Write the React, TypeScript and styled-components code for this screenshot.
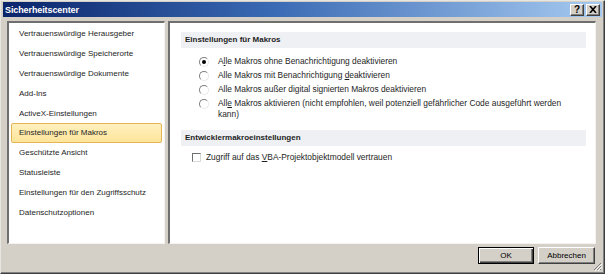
import styled, { createGlobalStyle } from "styled-components";

const GlobalStyle = createGlobalStyle`
  html, body {
    margin: 0;
    padding: 0;
    background: #d4d0c8;
  }
  body {
    font-family: "Liberation Sans", Arial, sans-serif;
    font-size: 8px;
    color: #1e1e1e;
  }
`;

const navItems = [
  "Vertrauenswürdige Herausgeber",
  "Vertrauenswürdige Speicherorte",
  "Vertrauenswürdige Dokumente",
  "Add-Ins",
  "ActiveX-Einstellungen",
  "Einstellungen für Makros",
  "Geschützte Ansicht",
  "Statusleiste",
  "Einstellungen für den Zugriffsschutz",
  "Datenschutzoptionen",
];

const App = () => {
  return (
    <>
      <GlobalStyle />
      <S.Window>
        <S.TitleBar>
          <S.Title>Sicherheitscenter</S.Title>
          <S.TitleButtons>
            <S.TitleButton>?</S.TitleButton>
            <S.TitleButton>
              <svg width="8" height="7" viewBox="0 0 8 7">
                <path d="M1 0 L7 7 M7 0 L1 7" stroke="#000" strokeWidth="1.6" />
              </svg>
            </S.TitleButton>
          </S.TitleButtons>
        </S.TitleBar>

        <S.Body>
          <S.Sidebar>
            {navItems.map((item) => (
              <S.NavItem key={item} $active={item === "Einstellungen für Makros"}>
                {item}
              </S.NavItem>
            ))}
          </S.Sidebar>

          <S.Content>
            <S.SectionHeader>Einstellungen für Makros</S.SectionHeader>
            <S.RadioGroup>
              <S.OptionRow>
                <S.Radio $checked />
                <S.OptionText>
                  A<u>l</u>le Makros ohne Benachrichtigung deaktivieren
                </S.OptionText>
              </S.OptionRow>
              <S.OptionRow>
                <S.Radio />
                <S.OptionText>
                  Alle Makros mit Benachrichtigung <u>d</u>eaktivieren
                </S.OptionText>
              </S.OptionRow>
              <S.OptionRow>
                <S.Radio />
                <S.OptionText>
                  Alle Makros außer digital signierten Makros deaktivieren
                </S.OptionText>
              </S.OptionRow>
              <S.OptionRow>
                <S.Radio />
                <S.OptionText>
                  All<u>e</u> Makros aktivieren (nicht empfohlen, weil potenziell
                  gefährlicher Code ausgeführt werden kann)
                </S.OptionText>
              </S.OptionRow>
            </S.RadioGroup>

            <S.SectionHeader $spaced>Entwicklermakroeinstellungen</S.SectionHeader>
            <S.CheckRow>
              <S.Checkbox />
              <S.OptionText>
                Zugriff auf das <u>V</u>BA-Projektobjektmodell vertrauen
              </S.OptionText>
            </S.CheckRow>
          </S.Content>
        </S.Body>

        <S.Footer>
          <S.Button $default>OK</S.Button>
          <S.Button>Abbrechen</S.Button>
        </S.Footer>

        <S.Grip width="9" height="9" viewBox="0 0 9 9">
          <path d="M8 1 L1 8 M8 4 L4 8 M8 7 L7 8" stroke="#808080" strokeWidth="1" />
          <path d="M9 2 L2 9 M9 5 L5 9" stroke="#ffffff" strokeWidth="1" />
        </S.Grip>
      </S.Window>
    </>
  );
};
export default App;

const Window = styled.div`
  position: relative;
  box-sizing: border-box;
  width: 605px;
  height: 274px;
  display: flex;
  flex-direction: column;
  padding: 1px 2px 2px 2px;
  background: #d4d0c8;
  border: 1px solid;
  border-color: #e8e6e1 #404040 #404040 #e8e6e1;
  box-shadow: inset -1px -1px 0 #808080;
`;

const TitleBar = styled.div`
  flex: none;
  height: 15px;
  display: flex;
  align-items: center;
  justify-content: space-between;
  padding: 0 2px 0 2px;
  background: linear-gradient(90deg, #0a246a 0%, #3a6ab4 45%, #a6caf0 100%);
`;

const Title = styled.span`
  color: #ffffff;
  font-weight: bold;
  font-size: 9px;
  letter-spacing: -0.1px;
`;

const TitleButtons = styled.div`
  display: flex;
  gap: 2px;
`;

const TitleButton = styled.div`
  box-sizing: border-box;
  width: 14px;
  height: 12px;
  display: flex;
  align-items: center;
  justify-content: center;
  background: #d4d0c8;
  border: 1px solid;
  border-color: #ffffff #404040 #404040 #ffffff;
  box-shadow: inset -1px -1px 0 #808080;
  font-weight: bold;
  font-size: 10px;
  color: #000;
`;

const Body = styled.div`
  flex: none;
  display: flex;
  gap: 3px;
  padding: 4px 6px 0 4px;
`;

const Sidebar = styled.div`
  box-sizing: border-box;
  width: 158px;
  height: 223px;
  padding: 1px 1px 0 1px;
  background: #ffffff;
  border-style: solid;
  border-width: 2px 1px 1px 2px;
  border-color: #6f6f6f #f4f3f0 #f4f3f0 #6f6f6f;
`;

const NavItem = styled.div<{ $active?: boolean }>`
  box-sizing: border-box;
  height: 19.8px;
  display: flex;
  align-items: center;
  padding-left: 7px;
  margin: 0 1px;
  white-space: nowrap;
  border-radius: 2px;
  border: 1px solid ${(p) => (p.$active ? "#e4b456" : "transparent")};
  background: ${(p) =>
    p.$active ? "linear-gradient(180deg, #fff0bf 0%, #fde49a 100%)" : "transparent"};
`;

const Content = styled.div`
  box-sizing: border-box;
  flex: 1;
  height: 223px;
  padding: 9px 9px 0 11px;
  background: #ffffff;
  font-size: 8.4px;
  border-style: solid;
  border-width: 2px 1px 1px 2px;
  border-color: #6f6f6f #f4f3f0 #f4f3f0 #6f6f6f;
`;

const SectionHeader = styled.div<{ $spaced?: boolean }>`
  height: 16px;
  line-height: 16px;
  padding-left: 4px;
  margin-top: ${(p) => (p.$spaced ? "10px" : "0")};
  background: #eef0f4;
  font-weight: bold;
  font-size: 8px;
`;

const RadioGroup = styled.div`
  display: flex;
  flex-direction: column;
  gap: 3px;
  margin-top: 8px;
  padding-left: 18px;
`;

const OptionRow = styled.div`
  display: flex;
  align-items: flex-start;
  gap: 9px;
`;

const OptionText = styled.span`
  line-height: 11px;
  max-width: 356px;
`;

const Radio = styled.span<{ $checked?: boolean }>`
  box-sizing: border-box;
  flex: none;
  width: 10px;
  height: 10px;
  margin-top: 1px;
  border-radius: 50%;
  border: 1px solid;
  border-color: #808080 #e8e8e8 #e8e8e8 #808080;
  background: #ffffff;
  display: flex;
  align-items: center;
  justify-content: center;

  &::after {
    content: "";
    width: 4px;
    height: 4px;
    border-radius: 50%;
    background: ${(p) => (p.$checked ? "#000" : "transparent")};
  }
`;

const CheckRow = styled.div`
  display: flex;
  align-items: center;
  gap: 5px;
  margin-top: 6px;
  padding-left: 11px;
`;

const Checkbox = styled.span`
  box-sizing: border-box;
  flex: none;
  width: 9px;
  height: 9px;
  background: #ffffff;
  border: 1px solid;
  border-color: #707070 #d8d8d8 #d8d8d8 #707070;
`;

const Footer = styled.div`
  flex: 1;
  display: flex;
  justify-content: flex-end;
  align-items: flex-start;
  gap: 4px;
  padding: 3px 7px 0 0;
`;

const Button = styled.div<{ $default?: boolean }>`
  box-sizing: border-box;
  width: ${(p) => (p.$default ? "56px" : "57px")};
  height: 17px;
  display: flex;
  align-items: center;
  justify-content: center;
  background: #d4d0c8;
  border: 1px solid;
  border-color: ${(p) =>
    p.$default ? "#000 #000 #000 #000" : "#ffffff #404040 #404040 #ffffff"};
  box-shadow: ${(p) =>
    p.$default
      ? "inset 1px 1px 0 #ffffff, inset -1px -1px 0 #404040, inset -2px -2px 0 #808080"
      : "inset -1px -1px 0 #808080"};
  color: #000;
`;

const Grip = styled.svg`
  position: absolute;
  right: 2px;
  bottom: 2px;
`;

const S = {
  Window,
  TitleBar,
  Title,
  TitleButtons,
  TitleButton,
  Body,
  Sidebar,
  NavItem,
  Content,
  SectionHeader,
  RadioGroup,
  OptionRow,
  OptionText,
  Radio,
  CheckRow,
  Checkbox,
  Footer,
  Button,
  Grip,
};
